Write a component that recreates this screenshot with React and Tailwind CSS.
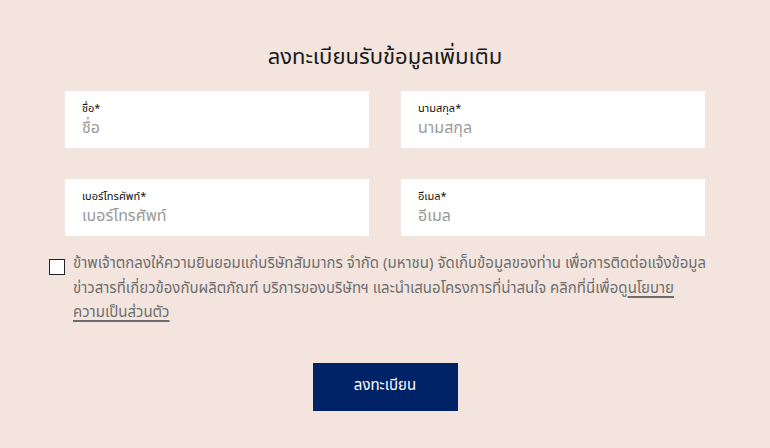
export default function App() {
  const fields = [
    { label: 'ชื่อ*', placeholder: 'ชื่อ' },
    { label: 'นามสกุล*', placeholder: 'นามสกุล' },
    { label: 'เบอร์โทรศัพท์*', placeholder: 'เบอร์โทรศัพท์' },
    { label: 'อีเมล*', placeholder: 'อีเมล' },
  ]

  return (
    <div
      className="min-h-screen w-full bg-[#f3e5de] flex flex-col items-center pt-[42px]"
      style={{ fontFamily: '"Noto Sans Thai", "Noto Sans", "Liberation Sans", sans-serif' }}
    >
      {/* Title */}
      <h1 className="text-[22px] leading-[32px] text-[#1a1a1a] mb-[17px]">
        ลงทะเบียนรับข้อมูลเพิ่มเติม
      </h1>

      {/* Fields */}
      <div className="grid grid-cols-2 gap-x-[32px] gap-y-[31px] w-[640px]">
        {fields.map((f) => (
          <label key={f.label} className="bg-white h-[57px] px-[17px] pt-[11px] flex flex-col">
            <span className="text-[11px] leading-[14px] text-[#111]">{f.label}</span>
            <input
              type="text"
              placeholder={f.placeholder}
              className="text-[16px] leading-[24px] text-[#333] placeholder:text-[#9a9a9a] bg-transparent outline-none"
            />
          </label>
        ))}
      </div>

      {/* Consent */}
      <div className="flex items-start gap-[8px] w-[672px] mt-[16px]">
        <span className="shrink-0 mt-[7px] w-[16px] h-[16px] border border-[#222] bg-white" />
        <p className="text-[15px] leading-[24.5px] text-[#6e6e6e]">
          ข้าพเจ้าตกลงให้ความยินยอมแก่บริษัทสัมมากร จำกัด (มหาชน) จัดเก็บข้อมูลของท่าน เพื่อการติดต่อแจ้งข้อมูลข่าวสารที่เกี่ยวข้องกับผลิตภัณฑ์ บริการของบริษัทฯ และนำเสนอโครงการที่น่าสนใจ คลิกที่นี่เพื่อดู
          <a href="#" className="underline decoration-[2px] underline-offset-[3px] text-[#6e6e6e]">
            นโยบาย
            <br />
            ความเป็นส่วนตัว
          </a>
        </p>
      </div>

      {/* Submit */}
      <button className="mt-[37px] w-[145px] h-[48px] bg-[#002266] text-white text-[15px]">
        ลงทะเบียน
      </button>
    </div>
  )
}
